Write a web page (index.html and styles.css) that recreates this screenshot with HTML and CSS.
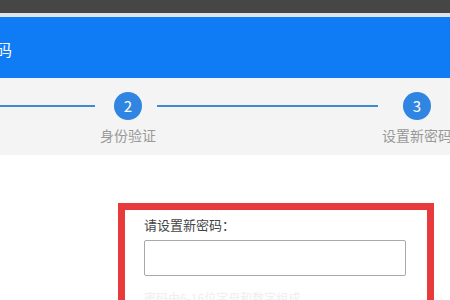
FILE: index.html
```html
<!DOCTYPE html>
<html lang="zh-CN">
<head>
    <meta charset="UTF-8">
    <meta name="viewport" content="width=device-width, initial-scale=1.0">
    <title>找回密码</title>
    <link rel="stylesheet" href="styles.css">
</head>
<body>
    <div class="topbar"></div>
    <div class="header">
        <span class="header-title">找回密码</span>
    </div>

    <div class="steps">
        <div class="step-line first"></div>
        <div class="step">
            <span class="step-num">2</span>
            <span class="step-label">身份验证</span>
        </div>
        <div class="step-line middle"></div>
        <div class="step wide">
            <span class="step-num">3</span>
            <span class="step-label">设置新密码</span>
        </div>
    </div>

    <div class="content">
        <div class="reset-box">
            <label class="field-label" for="new-password">请设置新密码：</label>
            <input class="field-input" id="new-password" type="password">
            <div class="field-hint">密码由6-16位字母和数字组成</div>
        </div>
    </div>
</body>
</html>
```

FILE: styles.css
```css
* {
    box-sizing: border-box;
}
body {
    margin: 0;
    width: 450px;
    height: 300px;
    overflow: hidden;
    font-family: "Noto Sans CJK SC", "Noto Sans", sans-serif;
    background-color: #fff;
}
.topbar {
    height: 17px;
    background-color: #464646;
    border-bottom: 4px solid #dde4eb;
}
.header {
    height: 61px;
    background-color: #0f7cf6;
    padding-top: 4px;
    line-height: 57px;
}
.header-title {
    display: inline-block;
    margin-left: -52px;
    color: #fff;
    font-size: 16px;
}
.steps {
    display: flex;
    align-items: flex-start;
    height: 77px;
    padding-top: 14px;
    background-color: #f4f4f4;
    white-space: nowrap;
}
.step-line {
    flex: none;
    height: 2px;
    margin-top: 13px;
    background-color: #3f88d2;
}
.step-line.first {
    width: 95px;
    margin-right: 2px;
}
.step-line.middle {
    width: 221px;
    margin-left: -2px;
}
.step {
    display: flex;
    flex-direction: column;
    align-items: center;
    flex: none;
    width: 62px;
}
.step.wide {
    width: 78px;
}
.step-num {
    width: 28px;
    height: 28px;
    border-radius: 50%;
    background-color: #2f85e1;
    color: #fff;
    font-size: 15px;
    line-height: 28px;
    text-align: center;
}
.step-label {
    margin-top: 5px;
    font-size: 14px;
    line-height: 20px;
    color: #999;
}
.content {
    padding: 48px 0 0 118px;
}
.reset-box {
    width: 316px;
    height: 97px;
    border: 7px solid #e93a3b;
    border-bottom: none;
    padding: 6px 0 0 19px;
    overflow: hidden;
}
.field-label {
    display: block;
    font-size: 13px;
    line-height: 18px;
    color: #444;
}
.field-input {
    display: block;
    width: 262px;
    height: 36px;
    margin-top: 6px;
    border: 1px solid #a9a9a9;
    border-radius: 2px;
    outline: none;
}
.field-hint {
    margin-top: 14px;
    font-size: 12px;
    line-height: 16px;
    color: #eeeeee;
}
```
